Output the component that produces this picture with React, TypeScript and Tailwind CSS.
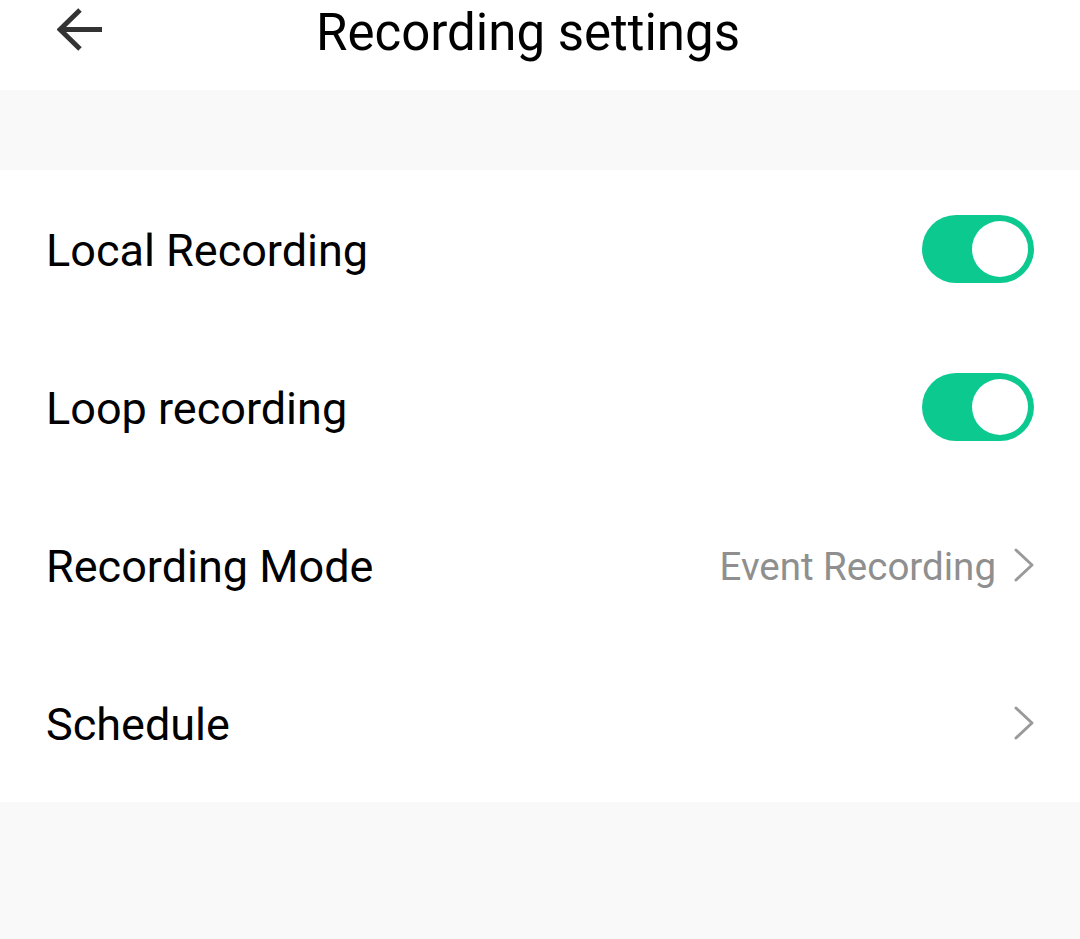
import React, { useState } from 'react';

const Toggle = ({ on, onChange }: { on: boolean; onChange: () => void }) => (
  <button
    onClick={onChange}
    className={
      on
        ? 'flex h-[68px] w-[112px] items-center justify-end rounded-full bg-[#0cc990] px-[6px]'
        : 'flex h-[68px] w-[112px] items-center justify-start rounded-full bg-[#e0e0e0] px-[6px]'
    }
  >
    <span className="block h-[56px] w-[56px] rounded-full bg-white" />
  </button>
);

const Chevron = () => (
  <svg width="20" height="34" viewBox="0 0 20 34" fill="none">
    <path d="M2 2 L18 17 L2 32" stroke="#9a9a9a" strokeWidth="3" strokeLinecap="round" strokeLinejoin="round" />
  </svg>
);

const App = () => {
  const [local, setLocal] = useState(true);
  const [loop, setLoop] = useState(true);

  return (
    <div className="min-h-[939px] bg-[#f9f9f9]" style={{ fontFamily: 'Roboto, "Noto Sans", sans-serif' }}>
      {/* Header */}
      <header className="flex h-[90px] items-start bg-white">
        <div className="w-[130px] pl-[57px] pt-[7px]">
          <svg width="46" height="46" viewBox="0 0 46 46" fill="none">
            <path d="M23 3 L3 22.5 L23 42 M3 22.5 H45" stroke="#333333" strokeWidth="5" strokeLinejoin="miter" />
          </svg>
        </div>
        <h1 className="flex-1 pt-[4px] text-center text-[51px] leading-[58px] font-normal text-black">
          Recording settings
        </h1>
        <div className="w-[154px]" />
      </header>

      <div className="h-[80px]" />

      {/* Settings list */}
      <section className="bg-white">
        <div className="flex h-[158px] items-center justify-between px-[46px]">
          <span className="pt-[4px] text-[45px] text-black">Local Recording</span>
          <Toggle on={local} onChange={() => setLocal(!local)} />
        </div>
        <div className="flex h-[158px] items-center justify-between px-[46px]">
          <span className="pt-[4px] text-[45px] text-black">Loop recording</span>
          <Toggle on={loop} onChange={() => setLoop(!loop)} />
        </div>
        <div className="flex h-[158px] items-center justify-between px-[46px]">
          <span className="pt-[4px] text-[45px] text-black">Recording Mode</span>
          <div className="flex items-center gap-[18px]">
            <span className="pt-[4px] text-[38.5px] text-[#8f8f8f]">Event Recording</span>
            <Chevron />
          </div>
        </div>
        <div className="flex h-[158px] items-center justify-between px-[46px]">
          <span className="pt-[4px] text-[45px] text-black">Schedule</span>
          <Chevron />
        </div>
      </section>
    </div>
  );
};

export default App;
